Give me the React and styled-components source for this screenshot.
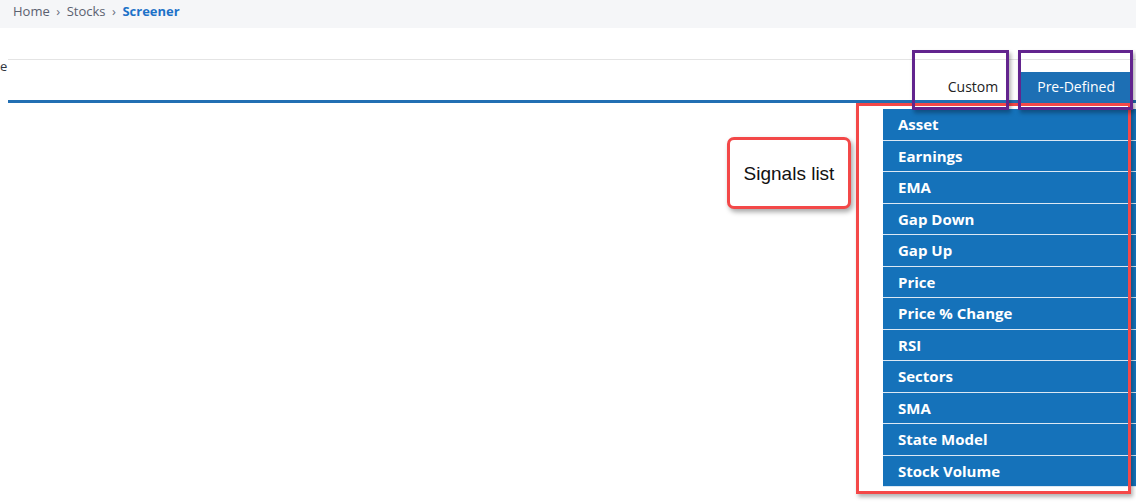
import React from 'react';
import styled, { createGlobalStyle } from 'styled-components';

const GlobalStyle = createGlobalStyle`
  body {
    margin: 0;
    background: #fff;
    font-family: 'Open Sans', 'Noto Sans', sans-serif;
  }
`;

const Screen = styled.div`
  position: relative;
  width: 1136px;
  height: 504px;
  overflow: hidden;
`;

const Crumbs = styled.div`
  height: 28px;
  background: #f5f6f8;
  padding-left: 13px;
  display: flex;
  align-items: center;
  gap: 6.5px;
  font-size: 13px;
  line-height: 22px;
  color: #5b6170;
  padding-bottom: 6px;
  box-sizing: border-box;
`;

const Crumb = styled.span`
  color: ${p => (p.$active ? '#1d72c8' : '#5b6170')};
  font-weight: ${p => (p.$active ? 700 : 400)};
`;

const Sep = styled.span`
  font-size: 13px;
  color: #6b7080;
`;

const Body = styled.div`
  padding: 31px 0 0 8px;
  position: relative;
`;

const TabBar = styled.div`
  display: flex;
  align-items: flex-end;
  height: 40px;
  border-top: 1px solid #e4e4e4;
  border-bottom: 3px solid #226fb3;
`;

const Cut = styled.span`
  align-self: flex-start;
  margin-left: -8px;
  font-size: 13px;
  line-height: 12px;
  color: #2f3440;
  flex: 1;
`;

const Tab = styled.div`
  height: 28px;
  padding: 0 ${p => (p.$on ? '17px' : '16px')};
  display: flex;
  align-items: center;
  font-size: 14px;
  color: ${p => (p.$on ? '#fff' : '#222')};
  background: ${p => (p.$on ? '#1d6fb4' : 'transparent')};
  margin-right: ${p => (p.$on ? '4px' : '6px')};
`;

const Signals = styled.ul`
  position: absolute;
  top: 109px;
  left: 883px;
  right: 0;
  margin: 0;
  padding: 0;
  list-style: none;
`;

const Signal = styled.li`
  height: 30.5px;
  border-bottom: 1px solid #dbe8f4;
  background: #1572ba;
  color: #fff;
  font-weight: 700;
  font-size: 15px;
  padding-left: 15px;
  display: flex;
  align-items: center;
`;

const Mark = styled.div`
  position: absolute;
  left: ${p => p.$x}px;
  top: ${p => p.$y}px;
  width: ${p => p.$w}px;
  height: ${p => p.$h}px;
  box-sizing: border-box;
  border: 3px solid ${p => p.$color};
  box-shadow: 2px 3px 4px rgba(0, 0, 0, 0.3);
  pointer-events: none;
`;

const Callout = styled.div`
  position: absolute;
  left: 727px;
  top: 137px;
  width: 124px;
  height: 72px;
  box-sizing: border-box;
  border: 3px solid #f34848;
  border-radius: 7px;
  background: #fff;
  box-shadow: 2px 3px 5px rgba(0, 0, 0, 0.35);
  display: flex;
  align-items: center;
  justify-content: center;
  padding-top: 2px;
  font-family: 'Liberation Sans', Arial, sans-serif;
  font-size: 19px;
  color: #111;
`;

const items = [
  'Asset', 'Earnings', 'EMA', 'Gap Down', 'Gap Up', 'Price',
  'Price % Change', 'RSI', 'Sectors', 'SMA', 'State Model', 'Stock Volume'
];

export default function App() {
  return (
    <Screen>
      <GlobalStyle />
      <Crumbs>
        <Crumb>Home</Crumb>
        <Sep>›</Sep>
        <Crumb>Stocks</Crumb>
        <Sep>›</Sep>
        <Crumb $active>Screener</Crumb>
      </Crumbs>
      <Body>
        <TabBar>
          <Cut>e</Cut>
          <Tab>Custom</Tab>
          <Tab $on>Pre-Defined</Tab>
        </TabBar>
      </Body>
      <Signals>
        {items.map(s => <Signal key={s}>{s}</Signal>)}
      </Signals>
      <Mark $x={856} $y={103} $w={275} $h={391} $color="#f44848" />
      <Mark $x={912} $y={50} $w={97} $h={60} $color="#62248e" />
      <Mark $x={1018} $y={50} $w={115} $h={60} $color="#62248e" />
      <Callout>Signals list</Callout>
    </Screen>
  );
}
